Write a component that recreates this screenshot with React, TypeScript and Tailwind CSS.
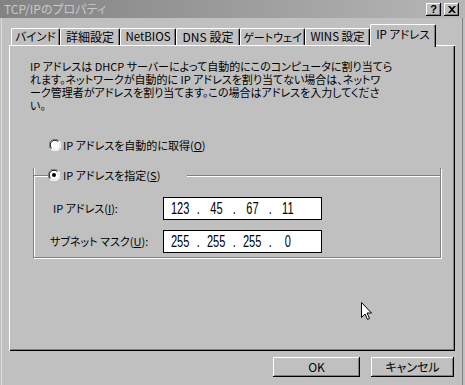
import React from "react";

const tabs: [string, number, string, boolean?][] = [
  ["バインド", 49, "text-[11.5px]"],
  ["詳細設定", 60, "text-[12px]"],
  ["NetBIOS", 56, "text-[11.5px]"],
  ["DNS 設定", 64, "text-[12px]"],
  ["ゲートウェイ", 65, "text-[11px]"],
  ["WINS 設定", 65, "text-[11.5px]"],
  ["IP アドレス", 66, "text-[11.5px]", true],
];

function Radio({ checked }: { checked?: boolean }) {
  return (
    <svg width="12" height="12" viewBox="0 0 12 12" className="shrink-0">
      <circle cx="6" cy="6" r="5.5" fill="#fff" />
      <path d="M1.8 10.2 A5.9 5.9 0 0 1 10.2 1.8" stroke="#808080" strokeWidth="1" fill="none" />
      <path d="M2.6 9.4 A4.8 4.8 0 0 1 9.4 2.6" stroke="#000" strokeWidth="1" fill="none" />
      <path d="M10.2 1.8 A5.9 5.9 0 0 1 1.8 10.2" stroke="#fff" strokeWidth="1" fill="none" />
      <path d="M9.4 2.6 A4.8 4.8 0 0 1 2.6 9.4" stroke="#dfdfdf" strokeWidth="1" fill="none" />
      {checked && <circle cx="6" cy="6" r="2" fill="#000" />}
    </svg>
  );
}

function IpBox({ parts }: { parts: string[] }) {
  return (
    <div className="w-[159px] h-[23px] border border-black bg-white flex items-center pl-[2px]">
      {parts.map((p, i) => (
        <React.Fragment key={i}>
          {i > 0 && (
            <div className="w-[8px] flex justify-center font-['Liberation_Sans',sans-serif] text-[17px] leading-[21px]">
              <span className="inline-block scale-x-[0.65]">.</span>
            </div>
          )}
          <div className="w-[28px] flex justify-center font-['Liberation_Sans',sans-serif] text-[17px] leading-[21px]">
            <span className="inline-block scale-x-[0.65]">{p}</span>
          </div>
        </React.Fragment>
      ))}
    </div>
  );
}

export default function App() {
  return (
    <div className="relative w-[465px] h-[385px] overflow-hidden bg-[#c0c0c0] text-black text-[11px] font-['Noto_Sans_CJK_JP',sans-serif] [font-feature-settings:'palt'] shadow-[inset_1px_0_0_#c0c0c0,inset_2px_0_0_#dcdcdc,inset_-2px_0_0_#c0c0c0,inset_-3px_0_0_#808080]">
      {/* Title bar */}
      <div className="h-[18px] flex items-center bg-linear-to-r from-[#828282] to-[#b6b6b6]">
        <div className="pl-[4px] text-[12px] text-[#c8c8c8] leading-[18px] flex-1">TCP/IPのプロパティ</div>
        <div className="flex gap-[3px] pr-[6px]">
          <div className="w-[15px] h-[13px] bg-[#c0c0c0] flex items-center justify-center shadow-[inset_-1px_-1px_0_#000,inset_1px_1px_0_#fff,inset_-2px_-2px_0_#808080] font-['Liberation_Sans',sans-serif] font-bold text-[11px] leading-none">
            ?
          </div>
          <div className="w-[15px] h-[13px] bg-[#c0c0c0] flex items-center justify-center shadow-[inset_-1px_-1px_0_#000,inset_1px_1px_0_#fff,inset_-2px_-2px_0_#808080]">
            <svg width="8" height="7" viewBox="0 0 8 7">
              <path d="M0 0 L2 0 L4 2 L6 0 L8 0 L5 3.5 L8 7 L6 7 L4 5 L2 7 L0 7 L3 3.5 Z" fill="#000" />
            </svg>
          </div>
        </div>
      </div>

      {/* Tabs */}
      <div className="mt-[6px] ml-[11px] h-[21px] flex items-end">
        {tabs.map(([label, w, size, sel]) =>
          sel ? (
            <div
              key={label}
              style={{ width: w }}
              className={`relative z-10 h-[23px] -mb-[2px] bg-[#c0c0c0] flex items-center justify-center pb-[3px] border-l border-t border-r border-l-white border-t-white border-r-black rounded-t-[2px] shadow-[inset_-1px_0_0_#808080] whitespace-nowrap ${size}`}
            >
              {label}
            </div>
          ) : (
            <div
              key={label}
              style={{ width: w }}
              className={`h-[17px] flex items-center justify-center border-l border-t border-r border-l-white border-t-white border-r-black rounded-t-[2px] shadow-[inset_-1px_0_0_#808080] whitespace-nowrap ${size}`}
            >
              {label}
            </div>
          )
        )}
      </div>

      {/* Panel */}
      <div className="ml-[9px] w-[446px] h-[306px] pt-[15px] pl-[21px] shadow-[inset_1px_1px_0_#fff,inset_-1px_-1px_0_#000,inset_-2px_-2px_0_#808080]">
        <p className="leading-[13px] whitespace-nowrap">
          IP アドレスは DHCP サーバーによって自動的にこのコンピュータに割り当てら
          <br />
          れます。ネットワークが自動的に IP アドレスを割り当てない場合は、ネットワ
          <br />
          ーク管理者がアドレスを割り当てます。この場合はアドレスを入力してくださ
          <br />
          い。
        </p>

        <div className="mt-[26px] ml-[19px] h-[14px] flex items-center gap-[2px]">
          <Radio />
          <span className="leading-[14px] whitespace-nowrap">
            IP アドレスを自動的に取得(<u>O</u>)
          </span>
        </div>

        <div className="mt-[23px] ml-[3px] w-[408px] h-[90px] border-l border-r border-b border-[#808080] shadow-[inset_1px_0_0_#fff,1px_1px_0_#fff]">
          <div className="-mt-[7px] h-[14px] flex items-start">
            <div className="mt-[7px] w-[14px] h-[2px] border-t border-t-[#808080] border-b border-b-white" />
            <div className="mt-[1px]">
              <Radio checked />
            </div>
            <div className="w-[127px] pl-[3px] leading-[14px] whitespace-nowrap">
              IP アドレスを指定(<u>S</u>)
            </div>
            <div className="mt-[7px] flex-1 h-[2px] border-t border-t-[#808080] border-b border-b-white" />
          </div>

          <div className="mt-[15px] h-[23px] flex items-center">
            <div className="pl-[19px] w-[129px] whitespace-nowrap">
              IP アドレス(<u>I</u>):
            </div>
            <IpBox parts={["123", "45", "67", "11"]} />
          </div>

          <div className="mt-[10px] h-[23px] flex items-center">
            <div className="pl-[16px] w-[129px] whitespace-nowrap">
              サブネット マスク(<u>U</u>):
            </div>
            <IpBox parts={["255", "255", "255", "0"]} />
          </div>
        </div>
      </div>

      {/* Buttons */}
      <div className="mt-[6px] flex justify-end gap-[11px] pr-[11px] text-[12px]">
        <div className="w-[87px] h-[20px] flex items-center justify-center shadow-[inset_-1px_-1px_0_#000,inset_1px_1px_0_#fff,inset_-2px_-2px_0_#808080]">
          OK
        </div>
        <div className="w-[83px] h-[20px] flex items-center justify-center shadow-[inset_-1px_-1px_0_#000,inset_1px_1px_0_#fff,inset_-2px_-2px_0_#808080]">
          キャンセル
        </div>
      </div>

      {/* Mouse cursor */}
      <svg
        className="absolute left-[361px] top-[302px]"
        width="12"
        height="19"
        viewBox="0 0 12 19"
      >
        <path
          d="M0.5 0.5 L0.5 15.5 L4 12 L6.5 17.5 L8.5 16.5 L6 11 L10.5 11 Z"
          fill="#fff"
          stroke="#000"
          strokeWidth="1"
          strokeLinejoin="miter"
        />
      </svg>
    </div>
  );
}
